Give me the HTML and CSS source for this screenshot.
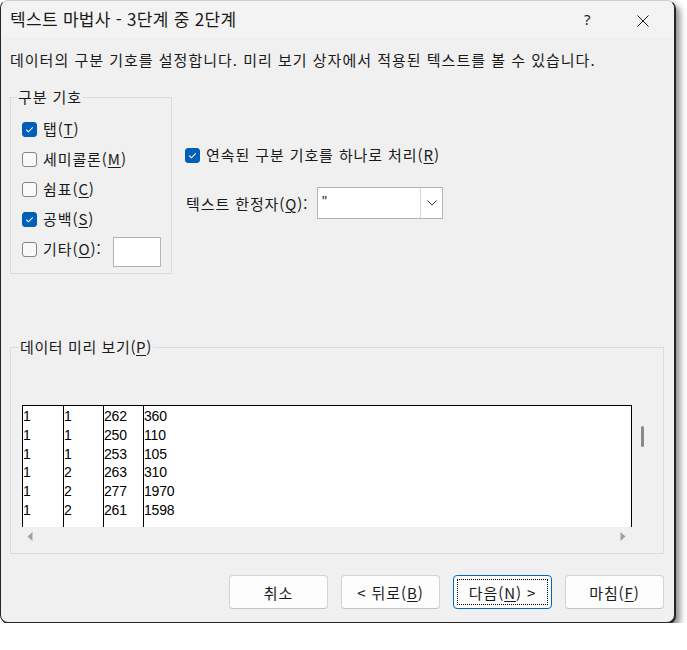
FILE: index.html
```html
<!DOCTYPE html>
<html lang="ko">
<head>
<meta charset="utf-8">
<link rel="stylesheet" href="styles.css">
</head>
<body>
<div class="window">
  <div class="titlebar">
    <span class="title">텍스트 마법사 - 3단계 중 2단계</span>
    <span class="tb-help">?</span>
    <span class="tb-close"><svg width="12" height="12" viewBox="0 0 12 12"><path d="M0.5 0.5 L11.5 11.5 M11.5 0.5 L0.5 11.5" stroke="#1a1a1a" stroke-width="1" fill="none"/></svg></span>
  </div>
  <div class="content">
    <div class="desc">데이터의 구분 기호를 설정합니다. 미리 보기 상자에서 적용된 텍스트를 볼 수 있습니다.</div>
    <div class="options">
      <fieldset class="group delims">
        <legend>구분 기호</legend>
        <div class="row"><span class="cb on"><svg width="15" height="15" viewBox="0 0 15 15"><path d="M4.2 7.6 L6.4 9.8 L10.8 5.4" stroke="#fff" stroke-width="1.1" fill="none"/></svg></span><span class="lbl">탭(<u>T</u>)</span></div>
        <div class="row"><span class="cb"></span><span class="lbl">세미콜론(<u>M</u>)</span></div>
        <div class="row"><span class="cb"></span><span class="lbl">쉼표(<u>C</u>)</span></div>
        <div class="row"><span class="cb on"><svg width="15" height="15" viewBox="0 0 15 15"><path d="M4.2 7.6 L6.4 9.8 L10.8 5.4" stroke="#fff" stroke-width="1.1" fill="none"/></svg></span><span class="lbl">공백(<u>S</u>)</span></div>
        <div class="row"><span class="cb"></span><span class="lbl lbl-other">기타(<u>O</u>):</span><span class="other-input"></span></div>
      </fieldset>
      <div class="right-col">
        <div class="row consec"><span class="cb on"><svg width="15" height="15" viewBox="0 0 15 15"><path d="M4.2 7.6 L6.4 9.8 L10.8 5.4" stroke="#fff" stroke-width="1.1" fill="none"/></svg></span><span class="lbl">연속된 구분 기호를 하나로 처리(<u>R</u>)</span></div>
        <div class="row qual">
          <span class="qlbl">텍스트 한정자(<u>Q</u>):</span>
          <div class="combo">
            <span class="combo-val">"</span>
            <span class="combo-btn"><svg width="10" height="6" viewBox="0 0 10 6"><path d="M0.5 0.5 L5 5 L9.5 0.5" stroke="#333" stroke-width="1" fill="none"/></svg></span>
          </div>
        </div>
      </div>
    </div>
    <fieldset class="group preview-group">
      <legend>데이터 미리 보기(<u>P</u>)</legend>
      <div class="preview">
        <div class="sheet">
          <div class="col"><div>1</div><div>1</div><div>1</div><div>1</div><div>1</div><div>1</div></div>
          <div class="col"><div>1</div><div>1</div><div>1</div><div>2</div><div>2</div><div>2</div></div>
          <div class="col"><div>262</div><div>250</div><div>253</div><div>263</div><div>277</div><div>261</div></div>
          <div class="col"><div>360</div><div>110</div><div>105</div><div>310</div><div>1970</div><div>1598</div></div>
        </div>
        <div class="vscroll"><span class="thumb"></span></div>
        <div class="hscroll">
          <svg width="6" height="9" viewBox="0 0 6 9"><path d="M5.5 0 L5.5 9 L0.5 4.5 Z" fill="#a0a0a0"/></svg>
          <svg width="6" height="9" viewBox="0 0 6 9"><path d="M0.5 0 L0.5 9 L5.5 4.5 Z" fill="#a0a0a0"/></svg>
        </div>
      </div>
    </fieldset>
    <div class="buttons">
      <button class="btn">취소</button>
      <button class="btn">&lt; 뒤로(<u>B</u>)</button>
      <button class="btn primary"><span class="focus">다음(<u>N</u>) &gt;</span></button>
      <button class="btn">마침(<u>F</u>)</button>
    </div>
  </div>
</div>
</body>
</html>
```
FILE: styles.css
```css
* { box-sizing: border-box; }
html, body { margin: 0; padding: 0; background: #ffffff; }
body {
  font-family: "Noto Sans CJK KR", "Noto Sans", sans-serif;
  font-size: 15px;
  letter-spacing: 0.9px;
  color: #1a1a1a;
}
u { text-decoration: underline; text-underline-offset: 2px; text-decoration-thickness: 1px; }

.window {
  width: 675px;
  height: 623px;
  background: #f0f0f0;
  border: 1px solid #262626;
  border-top-color: #cfcfcf;
  border-radius: 8px;
  box-shadow: 1px 1px 0 #262626, 5px 5px 6px rgba(0, 0, 0, 0.45);
  overflow: hidden;
}

.titlebar {
  height: 37px;
  background: #f3f3f3;
  display: flex;
  align-items: center;
  padding-left: 9px;
}
.title { font-size: 17px; letter-spacing: 0.3px; line-height: 24px; flex: 1; margin-top: -1px; }
.tb-help { width: 14px; font-size: 15px; letter-spacing: 0; font-family: "Noto Sans", sans-serif; color: #222; margin-right: 39px; margin-top: -1px; }
.tb-close { width: 12px; height: 12px; margin-right: 25px; display: flex; margin-top: 2px; }

.content { padding: 0 9px; }
.desc { line-height: 20px; margin-top: 12px; white-space: nowrap; letter-spacing: 1px; }

.options { display: flex; align-items: flex-start; margin-top: 17px; }

.group {
  margin: 0;
  border: 1px solid #dcdcdc;
  min-width: 0;
}
.group legend {
  line-height: 20px;
  padding: 0 1px;
}

.delims {
  width: 162px;
  padding: 7px 0 9px 11px;
}
.delims legend { margin-left: -5px; }
.row { display: flex; align-items: center; height: 30px; }
.cb {
  width: 15px;
  height: 15px;
  border: 1px solid #858585;
  border-radius: 3px;
  background: #f9f9f9;
  flex: none;
  display: flex;
}
.cb.on { background: #005fb8; border-color: #005fb8; }
.cb.on svg { margin: -1px; }
.lbl { margin-left: 6px; line-height: 20px; white-space: nowrap; }
.lbl-other { width: 70px; }
.other-input {
  width: 48px;
  height: 30px;
  margin-top: 5px;
  background: #ffffff;
  border: 1px solid #b4b4b4;
}

.right-col { margin-left: 13px; padding-top: 58px; }
.consec { height: 20px; }
.qual { height: 32px; margin-top: 22px; }
.qlbl { margin-left: 1px; width: 131px; white-space: nowrap; }
.combo {
  width: 126px;
  height: 32px;
  background: #ffffff;
  border: 1px solid #b4b4b4;
  display: flex;
}
.combo-val { flex: 1; padding-left: 4px; line-height: 26px; font-family: "Liberation Sans", sans-serif; font-size: 14px; letter-spacing: 0; }
.combo-btn {
  width: 22px;
  border-left: 1px solid #d6d6d6;
  display: flex;
  align-items: center;
  justify-content: center;
}

.preview-group {
  margin-top: 63px;
  width: 654px;
  padding: 48px 0 7px 11px;
}
.preview-group legend { margin-left: -3px; letter-spacing: 0.6px; }
.preview {
  display: grid;
  grid-template-columns: 610px 20px;
  grid-template-rows: 122px 19px;
}
.sheet {
  background: #ffffff;
  border: 1px solid #000;
  border-bottom: none;
  display: flex;
  font-family: "Liberation Sans", sans-serif;
  font-size: 14px;
  color: #000;
}
.col {
  width: 40px;
  padding-top: 1px;
  line-height: 18.8px;
  letter-spacing: -0.2px;
}
.col + .col { border-left: 1px solid #000; }
.col:last-child { width: auto; flex: 1; }
.thumb {
  display: block;
  width: 3px;
  height: 21px;
  border-radius: 2px;
  background: #8a8a8a;
  margin: 21px 0 0 9px;
}
.hscroll {
  display: flex;
  justify-content: space-between;
  align-items: center;
  padding: 0 6px 0 5px;
}

.buttons {
  display: flex;
  justify-content: flex-end;
  gap: 13px;
  margin-top: 21px;
  width: 654px;
}
.btn {
  width: 99px;
  height: 34px;
  background: #fdfdfd;
  border: 1px solid #d3d3d3;
  border-bottom-color: #c4c4c4;
  border-radius: 4px;
  font-family: "Noto Sans CJK KR", "Noto Sans", sans-serif;
  font-size: 15px;
  letter-spacing: 0.9px;
  color: #1a1a1a;
  padding: 0;
  display: flex;
  align-items: center;
  justify-content: center;
}
.btn.primary { border: 1px solid #0067c0; padding: 3px; }
.btn .focus {
  flex: 1;
  align-self: stretch;
  border: 1px dotted #000;
  display: flex;
  align-items: center;
  justify-content: center;
}
```
